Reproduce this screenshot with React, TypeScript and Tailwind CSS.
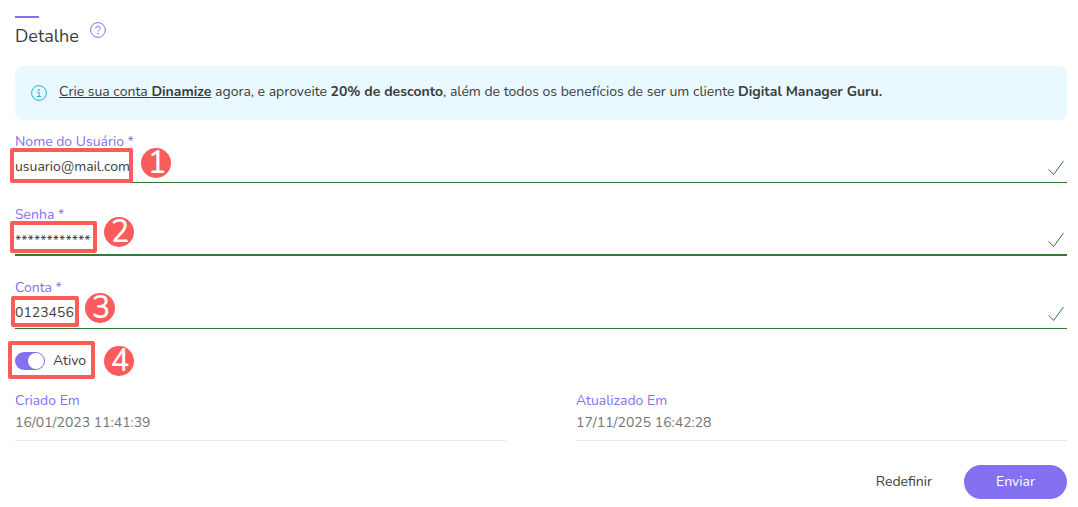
import type { ReactNode } from 'react'

type MarkerProps = {
  number: number
  boxClass: string
  badgeClass: string
}

function Marker({ number, boxClass, badgeClass }: MarkerProps) {
  return (
    <>
      <span className={`pointer-events-none absolute rounded-[2px] border-4 border-[#fa5c5c] ${boxClass}`} />
      <span
        className={`pointer-events-none absolute flex size-[30px] items-center justify-center rounded-full bg-[#fa5c5c] pb-px pl-0.5 text-[31px] leading-[30px] font-medium text-white ${badgeClass}`}
      >
        {number}
      </span>
    </>
  )
}

function HelpIcon() {
  return (
    <svg width="16" height="16" viewBox="0 0 16 16" fill="none" stroke="#8570f2" strokeLinecap="round">
      <circle cx="8" cy="8" r="7.4" />
      <path d="M5.9 6.2c0-1.2.9-2 2.1-2s2.1.8 2.1 1.9c0 1.5-2.1 1.6-2.1 3.1" />
      <circle cx="8" cy="11.4" r=".3" />
    </svg>
  )
}

function InfoIcon() {
  return (
    <svg width="16" height="16" viewBox="0 0 16 16" fill="none" stroke="#1cb5cd" className="shrink-0">
      <circle cx="8" cy="8" r="7.4" />
      <path d="M6.3 7.2h1.9v4.3M6 11.5h4.2" />
      <circle cx="8" cy="4.8" r=".5" fill="#1cb5cd" />
    </svg>
  )
}

function CheckIcon() {
  return (
    <svg
      width="16"
      height="16"
      viewBox="0 0 16 16"
      fill="none"
      stroke="#2e7d32"
      strokeLinecap="round"
      strokeLinejoin="round"
      className="mb-1.5 shrink-0 self-end"
    >
      <path d="M.8 9.6l4.8 4.9L15.2 1.4" />
    </svg>
  )
}

type FieldProps = {
  id: string
  label: string
  value: string
  lineClass: string
  children: ReactNode
}

function Field({ id, label, value, lineClass, children }: FieldProps) {
  return (
    <div className="relative">
      <label htmlFor={id} className="block text-[#8570f2]">
        {label} *
      </label>
      <div className={`flex h-[31px] items-center border-[#2e7d32] pr-[3px] ${lineClass}`}>
        <input id={id} type="text" defaultValue={value} className="min-w-0 flex-1 bg-transparent outline-none" />
        <CheckIcon />
      </div>
      {children}
    </div>
  )
}

function DateInfo({ label, value }: { label: string; value: string }) {
  return (
    <div className="border-b border-[#e6e6e6] pb-[7px]">
      <p className="text-[#8570f2]">{label}</p>
      <p className="mt-0.5 text-[#757575]">{value}</p>
    </div>
  )
}

export default function App() {
  return (
    <main className="bg-white pt-4 pr-[11px] pb-2 pl-[15px] font-['Nunito','Noto_Sans',sans-serif] text-sm text-[#3c3c3c]">
      <header>
        <div className="h-0.5 w-6 bg-[#8570f2]" />
        <div className="mt-1 flex items-start gap-[11px]">
          <h1 className="pt-0.5 text-lg leading-6">Detalhe</h1>
          <button type="button" aria-label="Ajuda">
            <HelpIcon />
          </button>
        </div>
      </header>

      <section className="mt-[18px] flex items-center gap-3 rounded-lg bg-[#e9f9ff] px-4 py-4">
        <InfoIcon />
        <p className="pb-0.5">
          <a href="#dinamize" className="underline">
            Crie sua conta <b>Dinamize</b>
          </a>{' '}
          agora, e aproveite <b>20% de desconto</b>, além de todos os benefícios de ser um cliente{' '}
          <b>Digital Manager Guru.</b>
        </p>
      </section>

      <form>
        <div className="mt-3 grid gap-[22px]">
          <Field id="usuario" label="Nome do Usuário" value="usuario@mail.com" lineClass="border-b">
            <Marker number={1} boxClass="top-4 -left-[5px] h-[35px] w-[123px]" badgeClass="top-4 left-[126px]" />
          </Field>
          <Field id="senha" label="Senha" value="************" lineClass="border-b-2 pt-0.5">
            <Marker number={2} boxClass="top-4 -left-[5px] h-8 w-[87px]" badgeClass="top-3 left-[89px]" />
          </Field>
          <Field id="conta" label="Conta" value="0123456" lineClass="border-b">
            <Marker number={3} boxClass="top-[18px] -left-1 h-[31px] w-[68px]" badgeClass="top-[15px] left-[70px]" />
          </Field>
        </div>

        <div className="relative mt-[21px]">
          <label className="flex items-center gap-2">
            <input type="checkbox" role="switch" defaultChecked className="peer sr-only" />
            <span className="flex h-[18px] w-[30px] items-center rounded-full bg-[#b0b0b0] p-px peer-checked:justify-end peer-checked:bg-[#8570f2]">
              <span className="size-4 rounded-full bg-white" />
            </span>
            <span className="pt-px">Ativo</span>
          </label>
          <Marker number={4} boxClass="-top-[9px] -left-[7px] h-[38px] w-[87px]" badgeClass="-top-1 left-[89px]" />
        </div>

        <div className="mt-5 grid grid-cols-2 gap-[70px]">
          <DateInfo label="Criado Em" value="16/01/2023 11:41:39" />
          <DateInfo label="Atualizado Em" value="17/11/2025 16:42:28" />
        </div>

        <div className="mt-6 flex items-center justify-end">
          <button type="reset" className="px-8 py-[7px]">
            Redefinir
          </button>
          <button type="submit" className="rounded-full bg-[#8570f2] px-8 py-[7px] text-white">
            Enviar
          </button>
        </div>
      </form>
    </main>
  )
}
